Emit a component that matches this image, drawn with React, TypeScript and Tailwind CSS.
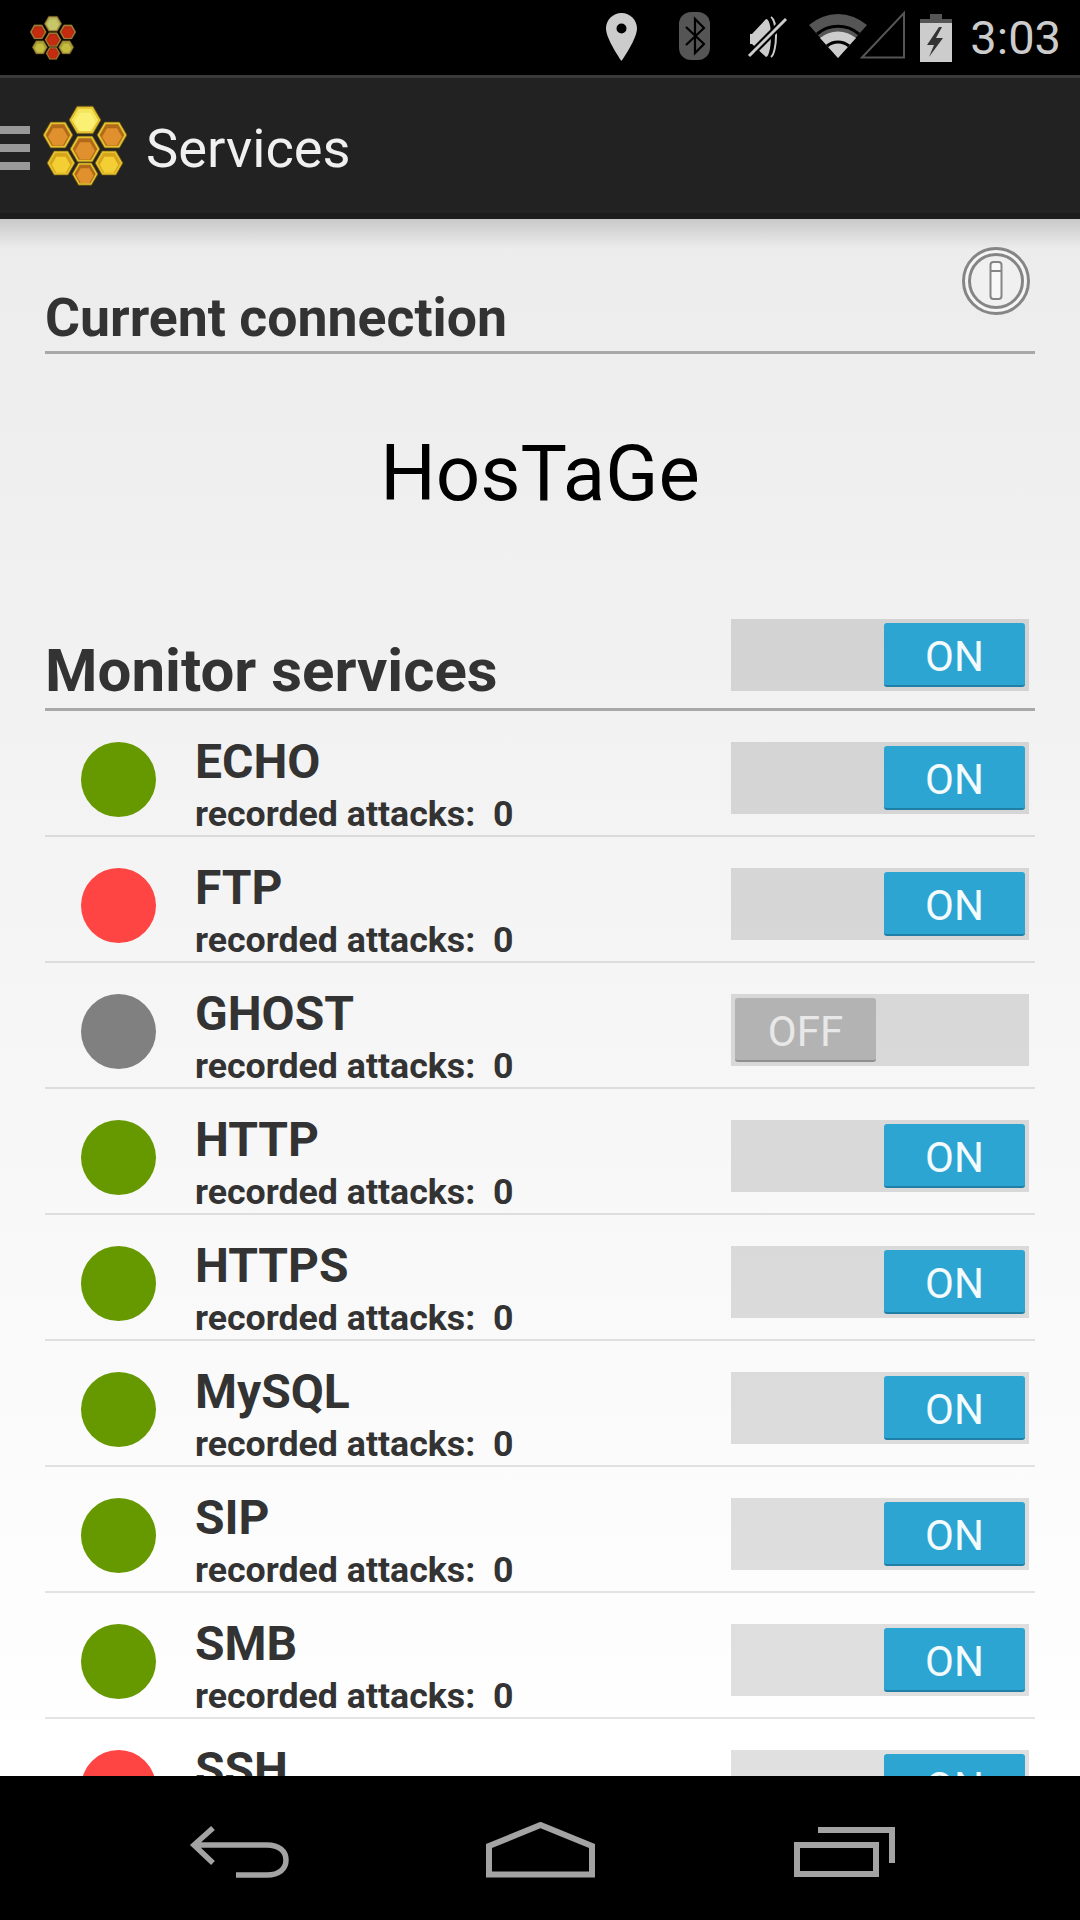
const services = [
  { name: "ECHO", status: "bg-[#669900]", on: true },
  { name: "FTP", status: "bg-[#ff4444]", on: true },
  { name: "GHOST", status: "bg-[#808080]", on: false },
  { name: "HTTP", status: "bg-[#669900]", on: true },
  { name: "HTTPS", status: "bg-[#669900]", on: true },
  { name: "MySQL", status: "bg-[#669900]", on: true },
  { name: "SIP", status: "bg-[#669900]", on: true },
  { name: "SMB", status: "bg-[#669900]", on: true },
  { name: "SSH", status: "bg-[#ff4444]", on: true },
];

const hexPoints = (cx: number, cy: number, r: number) => {
  const h = r * 0.866;
  return [
    [cx - r, cy],
    [cx - r / 2, cy - h],
    [cx + r / 2, cy - h],
    [cx + r, cy],
    [cx + r / 2, cy + h],
    [cx - r / 2, cy + h],
  ]
    .map((p) => p.join(","))
    .join(" ");
};

type Cell = { x: number; y: number; r: number; fill: string; light: string };

const Hex = ({ x, y, r, fill, light, rim }: Cell & { rim: string }) => (
  <g>
    <polygon points={hexPoints(x, y, r)} fill={rim} stroke="#5c4a10" strokeWidth="0.8" />
    <polygon points={hexPoints(x, y, r * 0.82)} fill={fill} />
    <polygon points={hexPoints(x, y + r * 0.12, r * 0.66)} fill={light} />
  </g>
);

const LAYOUT = [
  { x: 42, y: 16, r: 16 },
  { x: 15, y: 31, r: 15 },
  { x: 69, y: 31, r: 15 },
  { x: 42, y: 45, r: 15 },
  { x: 18, y: 59, r: 14 },
  { x: 66, y: 59, r: 14 },
  { x: 42, y: 70, r: 13 },
];

const GOLD = [
  { fill: "#f5e55a", light: "#fbef74" },
  { fill: "#b06a1a", light: "#e0902c" },
  { fill: "#b06a1a", light: "#e0902c" },
  { fill: "#b06a1a", light: "#e0902c" },
  { fill: "#d7a51a", light: "#f3cf35" },
  { fill: "#d7a51a", light: "#f3cf35" },
  { fill: "#b06a1a", light: "#e0902c" },
];

const RED = [
  { fill: "#b7b85a", light: "#c6c768" },
  { fill: "#b32a12", light: "#c42c10" },
  { fill: "#b32a12", light: "#c42c10" },
  { fill: "#b32a12", light: "#c42c10" },
  { fill: "#a8a030", light: "#c4bd40" },
  { fill: "#a8a030", light: "#c4bd40" },
  { fill: "#b32a12", light: "#c42c10" },
];

const Honeycomb = ({ className, red }: { className: string; red?: boolean }) => (
  <svg viewBox="0 0 84 84" className={className}>
    {LAYOUT.map((c, i) => (
      <Hex key={i} {...c} {...(red ? RED : GOLD)[i]} rim={red ? "#a5893f" : "#e3c12f"} />
    ))}
  </svg>
);

const StatusIcons = () => (
  <svg viewBox="0 0 330 75" className="h-[75px] w-[330px] shrink-0">
    {/* location */}
    <path
      fillRule="evenodd"
      fill="#cccccc"
      d="M40.500 13C31.900 13 25 19.900 25 28.500 25 39 40.500 61 40.500 61S56 39 56 28.500C56 19.900 49.100 13 40.500 13zm0 20.500a5 5 0 1 1 0-10 5 5 0 0 1 0 10z"
    />
    {/* bluetooth */}
    <rect x="98" y="12" width="31" height="48" rx="12" fill="#555555" />
    <path d="M105 27l18 17-9 9V19l9 9-18 17" fill="none" stroke="#000000" strokeWidth="2.2" />
    {/* muted */}
    <path d="M171 34l14-15c3 0 5 7 5 17s-2 21-5 21l-14-13h-2V34z" fill="#cccccc" />
    <path d="M190 17c3 2 5 10 5 19s-2 19-5 21" fill="none" stroke="#cccccc" strokeWidth="2" />
    <path d="M168 56l37-37" stroke="#000000" strokeWidth="7" />
    <path d="M168 56l37-37" stroke="#cccccc" strokeWidth="3" />
    {/* wifi */}
    <path d="M228 25a44 44 0 0 1 58 0l-29 33z" fill="#555555" />
    <path d="M239 38a28 28 0 0 1 36 0l-18 20z" fill="#cccccc" />
    <path d="M236 34a32 32 0 0 1 42 0" fill="none" stroke="#000000" strokeWidth="3" />
    <path d="M246 46a17 17 0 0 1 22 0" fill="none" stroke="#000000" strokeWidth="3" />
    {/* signal */}
    <path d="M281 57.500L323 13v44.500z" fill="none" stroke="#555555" strokeWidth="2" />
  </svg>
);

const Battery = () => (
  <svg viewBox="0 0 32 48" className="h-[48px] w-[32px] shrink-0">
    <path d="M10 0h12v5h10v9H0V5h10z" fill="#555555" />
    <path d="M0 9h32v39H0z" fill="#cccccc" />
    <path d="M19 13L7 31h7l-5 12 14-19h-7l6-11z" fill="#333333" />
  </svg>
);

const Toggle = ({ on }: { on: boolean }) => (
  <div
    className={`flex h-[72px] w-[298px] shrink-0 items-center bg-black/[.12] px-1 ${
      on ? "justify-end" : "justify-start"
    }`}
  >
    <div
      className={`flex h-[64px] w-[141px] items-center justify-center rounded-[3px] border-b-2 pt-[6px] text-[42px] leading-none ${
        on ? "border-[#1f7fa6] bg-[#2ca5d2] text-[#f4fbfd]" : "border-[#8f8f8f] bg-[#b3b3b3] text-[#e8e8e8]"
      }`}
    >
      {on ? "ON" : "OFF"}
    </div>
  </div>
);

const ServiceRow = ({ name, status, on }: (typeof services)[number]) => (
  <div className="flex h-[126px] shrink-0 border-b-2 border-black/10 pt-[31px]">
    <div className={`ml-[36px] h-[75px] w-[75px] shrink-0 rounded-full ${status}`} />
    <div className="-mt-[31px] ml-[39px] flex flex-1 flex-col font-bold text-[#333333]">
      <span className="mt-[19px] text-[48px] leading-[64px]">{name}</span>
      <span className="text-[35.7px] leading-[40px] whitespace-pre">recorded attacks:  0</span>
    </div>
    <div className="mr-[6px]">
      <Toggle on={on} />
    </div>
  </div>
);

export default function App() {
  return (
    <div className="flex h-[1920px] w-[1080px] flex-col overflow-hidden bg-black font-['Roboto',sans-serif]">
      {/* status bar */}
      <div className="flex h-[75px] shrink-0 items-center bg-black">
        <Honeycomb red className="ml-[30px] h-[46px] w-[46px]" />
        <div className="ml-auto flex items-center">
          <StatusIcons />
          <div className="ml-[9px] mb-[-1px]">
            <Battery />
          </div>
          <span className="mr-[19px] ml-[18px] text-[47px] leading-none text-[#cccccc]">3:03</span>
        </div>
      </div>

      {/* action bar */}
      <div className="flex h-[144px] shrink-0 items-center border-t-[3px] border-b-[6px] border-t-[#3a3a3a] border-b-[#1c1c1c] bg-[#222222]">
        <div className="mt-[4px] flex w-[30px] flex-col gap-[10px]">
          <div className="h-[8px] bg-[#999999]" />
          <div className="h-[8px] bg-[#999999]" />
          <div className="h-[8px] bg-[#999999]" />
        </div>
        <Honeycomb className="ml-[13px] h-[84px] w-[84px]" />
        <span className="mt-[8px] ml-[19px] text-[54.3px] leading-none text-[#f0f0f0]">Services</span>
      </div>

      {/* content */}
      <div className="relative h-[1557px] shrink-0 overflow-hidden bg-linear-to-b from-[#ececec] to-white px-[45px]">
        <div className="absolute inset-x-0 top-0 h-[30px] bg-linear-to-b from-[#c9c9c9] to-transparent" />

        <div className="relative flex h-[135px] items-end justify-between border-b-[3px] border-[#a8a8a8]">
          <span className="pb-[3px] text-[53.6px] leading-[60px] font-bold text-[#333333]">Current connection</span>
          <svg viewBox="0 0 68 68" className="mr-[5px] mb-[36px] h-[68px] w-[68px]">
            <circle cx="34" cy="34" r="32.500" fill="#f5f5f5" stroke="#858585" strokeWidth="3" />
            <circle cx="34" cy="34" r="26.500" fill="#f0f0f0" stroke="#858585" strokeWidth="3" />
            <rect x="28.500" y="15" width="11" height="37" rx="3" fill="#f8f8f8" stroke="#858585" strokeWidth="2" />
            <path d="M28.500 24h11" stroke="#858585" strokeWidth="2" />
          </svg>
        </div>

        <div className="flex h-[220px] items-center justify-center pt-[19px] text-[78px] leading-none text-black">
          HosTaGe
        </div>

        <div className="flex h-[137px] items-end justify-between border-b-[3px] border-[#a8a8a8]">
          <span className="pb-[2px] text-[60px] leading-[70px] font-bold text-[#333333]">Monitor services</span>
          <div className="mr-[6px] mb-[17px]">
            <Toggle on />
          </div>
        </div>

        <div className="flex flex-col">
          {services.map((s) => (
            <ServiceRow key={s.name} {...s} />
          ))}
        </div>
      </div>

      {/* navigation bar */}
      <div className="flex h-[144px] shrink-0 items-start bg-black pt-[46px]">
        <svg viewBox="0 0 108 56" className="ml-[189px] h-[56px] w-[108px]">
          <path
            d="M24 6L5 23l19 18M5 23h73c12 0 19 6 19 15s-7 15-19 15H47"
            fill="none"
            stroke="#a3a3a3"
            strokeWidth="5.500"
          />
        </svg>
        <svg viewBox="0 0 110 56" className="ml-[189px] h-[56px] w-[110px]">
          <path d="M3 52.500V24L54.500 3 106 24v28.500z" fill="none" stroke="#a3a3a3" strokeWidth="6" />
        </svg>
        <svg viewBox="0 0 104 52" className="mt-[5px] ml-[198px] h-[52px] w-[104px]">
          <path d="M3 18h79v29H3z" fill="none" stroke="#a3a3a3" strokeWidth="6" />
          <path d="M24 3h74v33" fill="none" stroke="#a3a3a3" strokeWidth="6" />
        </svg>
      </div>
    </div>
  );
}
